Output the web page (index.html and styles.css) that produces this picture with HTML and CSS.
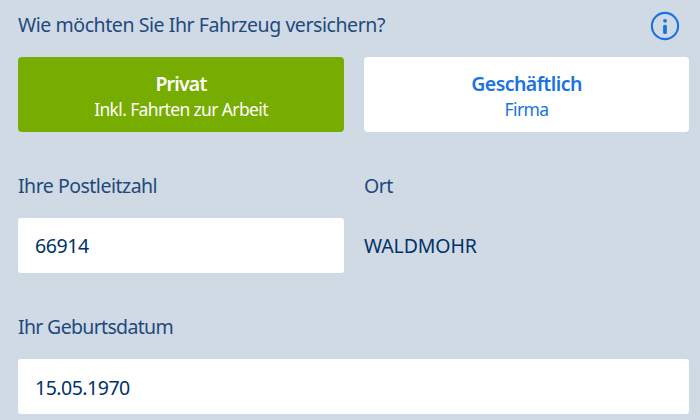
FILE: index.html
```html
<!DOCTYPE html>
<html lang="de">
<head>
    <meta charset="UTF-8">
    <meta name="viewport" content="width=device-width, initial-scale=1.0">
    <title>Fahrzeug versichern</title>
    <link rel="stylesheet" href="styles.css">
</head>
<body>

    <form class="insurance-form">
        <div class="form-header">
            <div class="label question">Wie möchten Sie Ihr Fahrzeug versichern?</div>
            <svg class="info-icon" viewBox="0 0 30 30" aria-label="Info">
                <circle cx="15" cy="15" r="13.1" fill="none" stroke="currentColor" stroke-width="2.1"/>
                <circle cx="15" cy="9.8" r="1.9" fill="currentColor"/>
                <rect x="13.1" y="13.7" width="3.8" height="9.3" rx="1.5" fill="currentColor"/>
            </svg>
        </div>

        <div class="choices">
            <button type="button" class="choice active">
                <span class="choice-title private">Privat</span>
                <span class="choice-text">Inkl. Fahrten zur Arbeit</span>
            </button>
            <button type="button" class="choice">
                <span class="choice-title">Geschäftlich</span>
                <span class="choice-text">Firma</span>
            </button>
        </div>

        <div class="field-row">
            <div class="field">
                <label class="label" for="zip">Ihre Postleitzahl</label>
                <input class="text-input" type="text" id="zip" value="66914">
            </div>
            <div class="field">
                <div class="label">Ort</div>
                <div class="city">WALDMOHR</div>
            </div>
        </div>

        <div class="field">
            <label class="label birthday-label" for="birthday">Ihr Geburtsdatum</label>
            <input class="text-input birthday-input" type="text" id="birthday" value="15.05.1970">
        </div>
    </form>

</body>
</html>
```
FILE: styles.css
```css
:root {
    --background: #d0dae4;
    --label-color: #1f497d;
    --text-color: #003269;
    --link-color: #1a73e1;
    --active-color: #77ad00;
    --border-radius: 4px;
}

* {
    margin: 0;
    padding: 0;
    box-sizing: border-box;
}

body {
    font-family: "Segoe UI", "Noto Sans", sans-serif;
    font-size: 19.5px;
    line-height: 26px;
    background-color: var(--background);
    color: var(--text-color);
    overflow: hidden;
}

.insurance-form {
    display: flex;
    flex-direction: column;
    gap: 41px;
    padding: 12px 11px 6px 18px;
}

.form-header {
    display: flex;
    justify-content: space-between;
    height: 26px;
    margin-bottom: -22px;
}

.label {
    display: block;
    color: var(--label-color);
    letter-spacing: -0.5px;
    white-space: nowrap;
}

.question {
    letter-spacing: -0.43px;
}

.birthday-label {
    letter-spacing: -0.67px;
}

.info-icon {
    width: 30px;
    height: 30px;
    margin: -1px 9px 0 0;
    color: var(--link-color);
}

/* Choice buttons */
.choices,
.field-row {
    display: grid;
    grid-template-columns: 326px 325px;
    column-gap: 20px;
}

.choice {
    display: flex;
    flex-direction: column;
    align-items: center;
    height: 75px;
    padding-top: 14px;
    border: none;
    border-radius: var(--border-radius);
    background-color: #ffffff;
    color: var(--link-color);
    font-family: inherit;
    cursor: pointer;
}

.choice.active {
    background-color: var(--active-color);
    color: #ffffff;
}

.choice-title {
    font-size: 19.5px;
    font-weight: 600;
    line-height: 26px;
    letter-spacing: -0.55px;
}

.choice-title.private {
    letter-spacing: -0.8px;
}

.choice-text {
    font-size: 17.5px;
    line-height: 25px;
    letter-spacing: -0.64px;
}

/* Form fields */
.field {
    display: flex;
    flex-direction: column;
    gap: 19px;
}

.text-input {
    width: 100%;
    height: 55px;
    padding: 0 17px;
    border: none;
    border-radius: 3px;
    background-color: #ffffff;
    color: var(--text-color);
    font-family: inherit;
    font-size: 19.5px;
    letter-spacing: -0.4px;
    outline: none;
}

.birthday-input {
    padding-top: 2px;
    letter-spacing: -0.5px;
}

.city {
    line-height: 55px;
    letter-spacing: -0.12px;
}
```
